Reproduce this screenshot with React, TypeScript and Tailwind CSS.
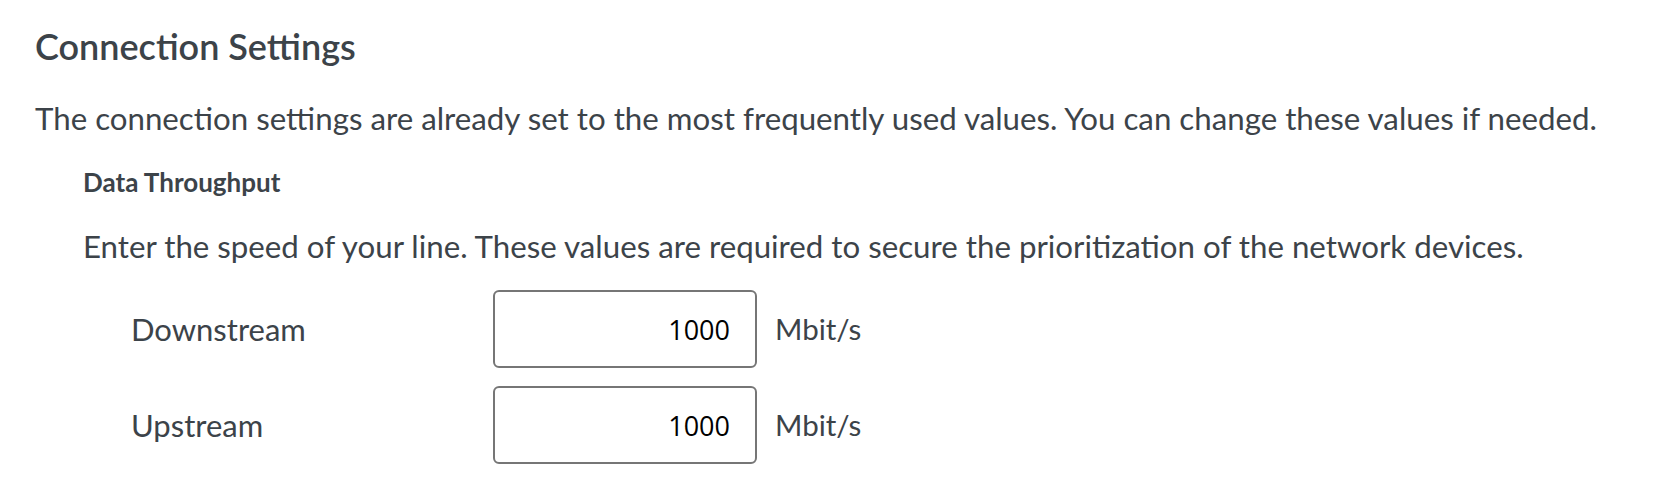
const labelCls = "w-[362px] shrink-0 text-[31px] leading-[40px]";

function SpeedRow({ label, value }: { label: string; value: string }) {
  return (
    <div className="flex items-center">
      <span className={labelCls}>{label}</span>
      <input
        type="text"
        defaultValue={value}
        className="w-[264px] h-[78px] shrink-0 rounded-[6px] border-2 border-[#767676] bg-white pr-[25px] text-right text-[27px] text-black font-['Open_Sans',sans-serif] outline-none"
      />
      <span className="ml-[18px] text-[29.5px] leading-[40px]">Mbit/s</span>
    </div>
  );
}

export default function App() {
  return (
    <div className="min-h-[479px] bg-white pl-[35px] pt-[24px] text-[#3c4349] font-['Lato',sans-serif]">
      <h2 className="text-[36px] leading-[44px] font-semibold">Connection Settings</h2>
      <p className="mt-[30px] text-[31.25px] leading-[40px] whitespace-nowrap">
        The connection settings are already set to the most frequently used values. You can change these values if needed.
      </p>

      <div className="pl-[48px]">
        <h3 className="mt-[27.5px] text-[26px] leading-[32px] font-bold">Data Throughput</h3>
        <p className="mt-[28.5px] text-[31.25px] leading-[40px] whitespace-nowrap">
          Enter the speed of your line. These values are required to secure the prioritization of the network devices.
        </p>

        {/* speed inputs */}
        <div className="mt-[24px] pl-[48px] flex flex-col gap-[18px]">
          <SpeedRow label="Downstream" value="1000" />
          <SpeedRow label="Upstream" value="1000" />
        </div>
      </div>
    </div>
  );
}
